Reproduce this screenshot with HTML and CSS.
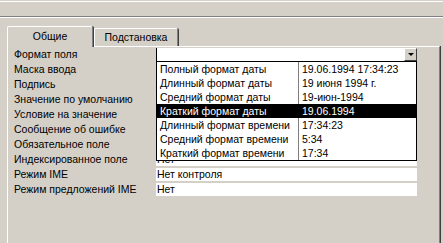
FILE: index.html
```html
<!DOCTYPE html>
<html lang="ru">
<head>
  <meta charset="UTF-8">
  <title>Свойства поля</title>
  <link rel="stylesheet" href="styles.css">
</head>
<body>
  <div class="topbar"></div>

  <div class="tabs">
    <div class="tab active">Общие</div>
    <div class="tab">Подстановка</div>
  </div>

  <div class="panel">
    <div class="props">
      <div class="label">Формат поля</div>
      <div class="value combo"><span class="drop-btn"></span></div>

      <div class="label">Маска ввода</div>
      <div class="value"></div>

      <div class="label">Подпись</div>
      <div class="value"></div>

      <div class="label">Значение по умолчанию</div>
      <div class="value"></div>

      <div class="label">Условие на значение</div>
      <div class="value"></div>

      <div class="label">Сообщение об ошибке</div>
      <div class="value"></div>

      <div class="label">Обязательное поле</div>
      <div class="value"></div>

      <div class="label">Индексированное поле</div>
      <div class="value">Нет</div>

      <div class="label">Режим IME</div>
      <div class="value">Нет контроля</div>

      <div class="label">Режим предложений IME</div>
      <div class="value">Нет</div>
    </div>

    <div class="dropdown">
      <div class="opt"><span>Полный формат даты</span><span>19.06.1994 17:34:23</span></div>
      <div class="opt"><span>Длинный формат даты</span><span>19 июня 1994 г.</span></div>
      <div class="opt"><span>Средний формат даты</span><span>19-июн-1994</span></div>
      <div class="opt selected"><span>Краткий формат даты</span><span>19.06.1994</span></div>
      <div class="opt"><span>Длинный формат времени</span><span>17:34:23</span></div>
      <div class="opt"><span>Средний формат времени</span><span>5:34</span></div>
      <div class="opt"><span>Краткий формат времени</span><span>17:34</span></div>
    </div>
  </div>
</body>
</html>
```

FILE: styles.css
```css
body {
  margin: 0;
  background: #d4d0c8;
  font-family: "Liberation Sans", Arial, sans-serif;
  font-size: 10.5px;
  color: #000;
  overflow: hidden;
}

.topbar {
  margin-top: 1px;
  height: 14px;
  border-top: 1px solid #fff;
  border-bottom: 1px solid #808080;
  box-shadow: 0 1px 0 #fff;
}

.tabs {
  display: flex;
  align-items: flex-end;
  margin-top: 9px;
  padding-left: 7px;
}

.tab {
  box-sizing: border-box;
  height: 18px;
  width: 84px;
  line-height: 17px;
  text-align: center;
  border-left: 1px solid #fff;
  border-top: 1px solid #fff;
  border-right: 1px solid #808080;
  box-shadow: 1px 0 0 #404040;
  border-top-left-radius: 2px;
  border-top-right-radius: 2px;
  margin-right: 1px;
}

.tab.active {
  position: relative;
  z-index: 1;
  height: 21px;
  width: 86px;
  line-height: 19px;
  margin-bottom: -1px;
  background: #d4d0c8;
}

.panel {
  position: relative;
  height: 200px;
  margin: 0 3px 0 7px;
  border-left: 1px solid #fff;
  border-top: 1px solid #fff;
  border-right: 1px solid #808080;
  box-shadow: 1px 0 0 #404040;
}

.props {
  display: grid;
  grid-template-columns: 142px 261px;
  grid-auto-rows: 13px;
  row-gap: 2px;
  padding: 1px 0 0 6px;
}

.label,
.value {
  line-height: 13px;
  white-space: nowrap;
}

.value {
  background: #fff;
  padding-left: 1px;
}

.combo {
  position: relative;
  border-left: 1px solid #000;
  padding: 0;
}

.drop-btn {
  position: absolute;
  right: 0;
  top: 0;
  box-sizing: border-box;
  width: 13px;
  height: 13px;
  background: #d4d0c8;
  border-top: 1px solid #fff;
  border-left: 1px solid #fff;
  border-right: 1px solid #404040;
  border-bottom: 1px solid #404040;
}

.drop-btn::after {
  content: "";
  position: absolute;
  left: 3px;
  top: 4px;
  border-left: 3px solid transparent;
  border-right: 3px solid transparent;
  border-top: 3px solid #000;
}

.dropdown {
  position: absolute;
  left: 148px;
  top: 14px;
  box-sizing: border-box;
  width: 261px;
  height: 100px;
  border: 1px solid #000;
  background: #fff;
  z-index: 2;
}

.opt {
  display: grid;
  grid-template-columns: 142px 1fr;
  height: 14px;
  line-height: 14px;
  white-space: nowrap;
}

.opt span {
  padding-left: 3px;
}

.opt span:first-child {
  box-sizing: border-box;
  border-right: 1px solid #808080;
}

.opt.selected {
  background: #000;
  color: #fff;
}

.opt.selected span:first-child {
  border-right-color: #000;
}
```
